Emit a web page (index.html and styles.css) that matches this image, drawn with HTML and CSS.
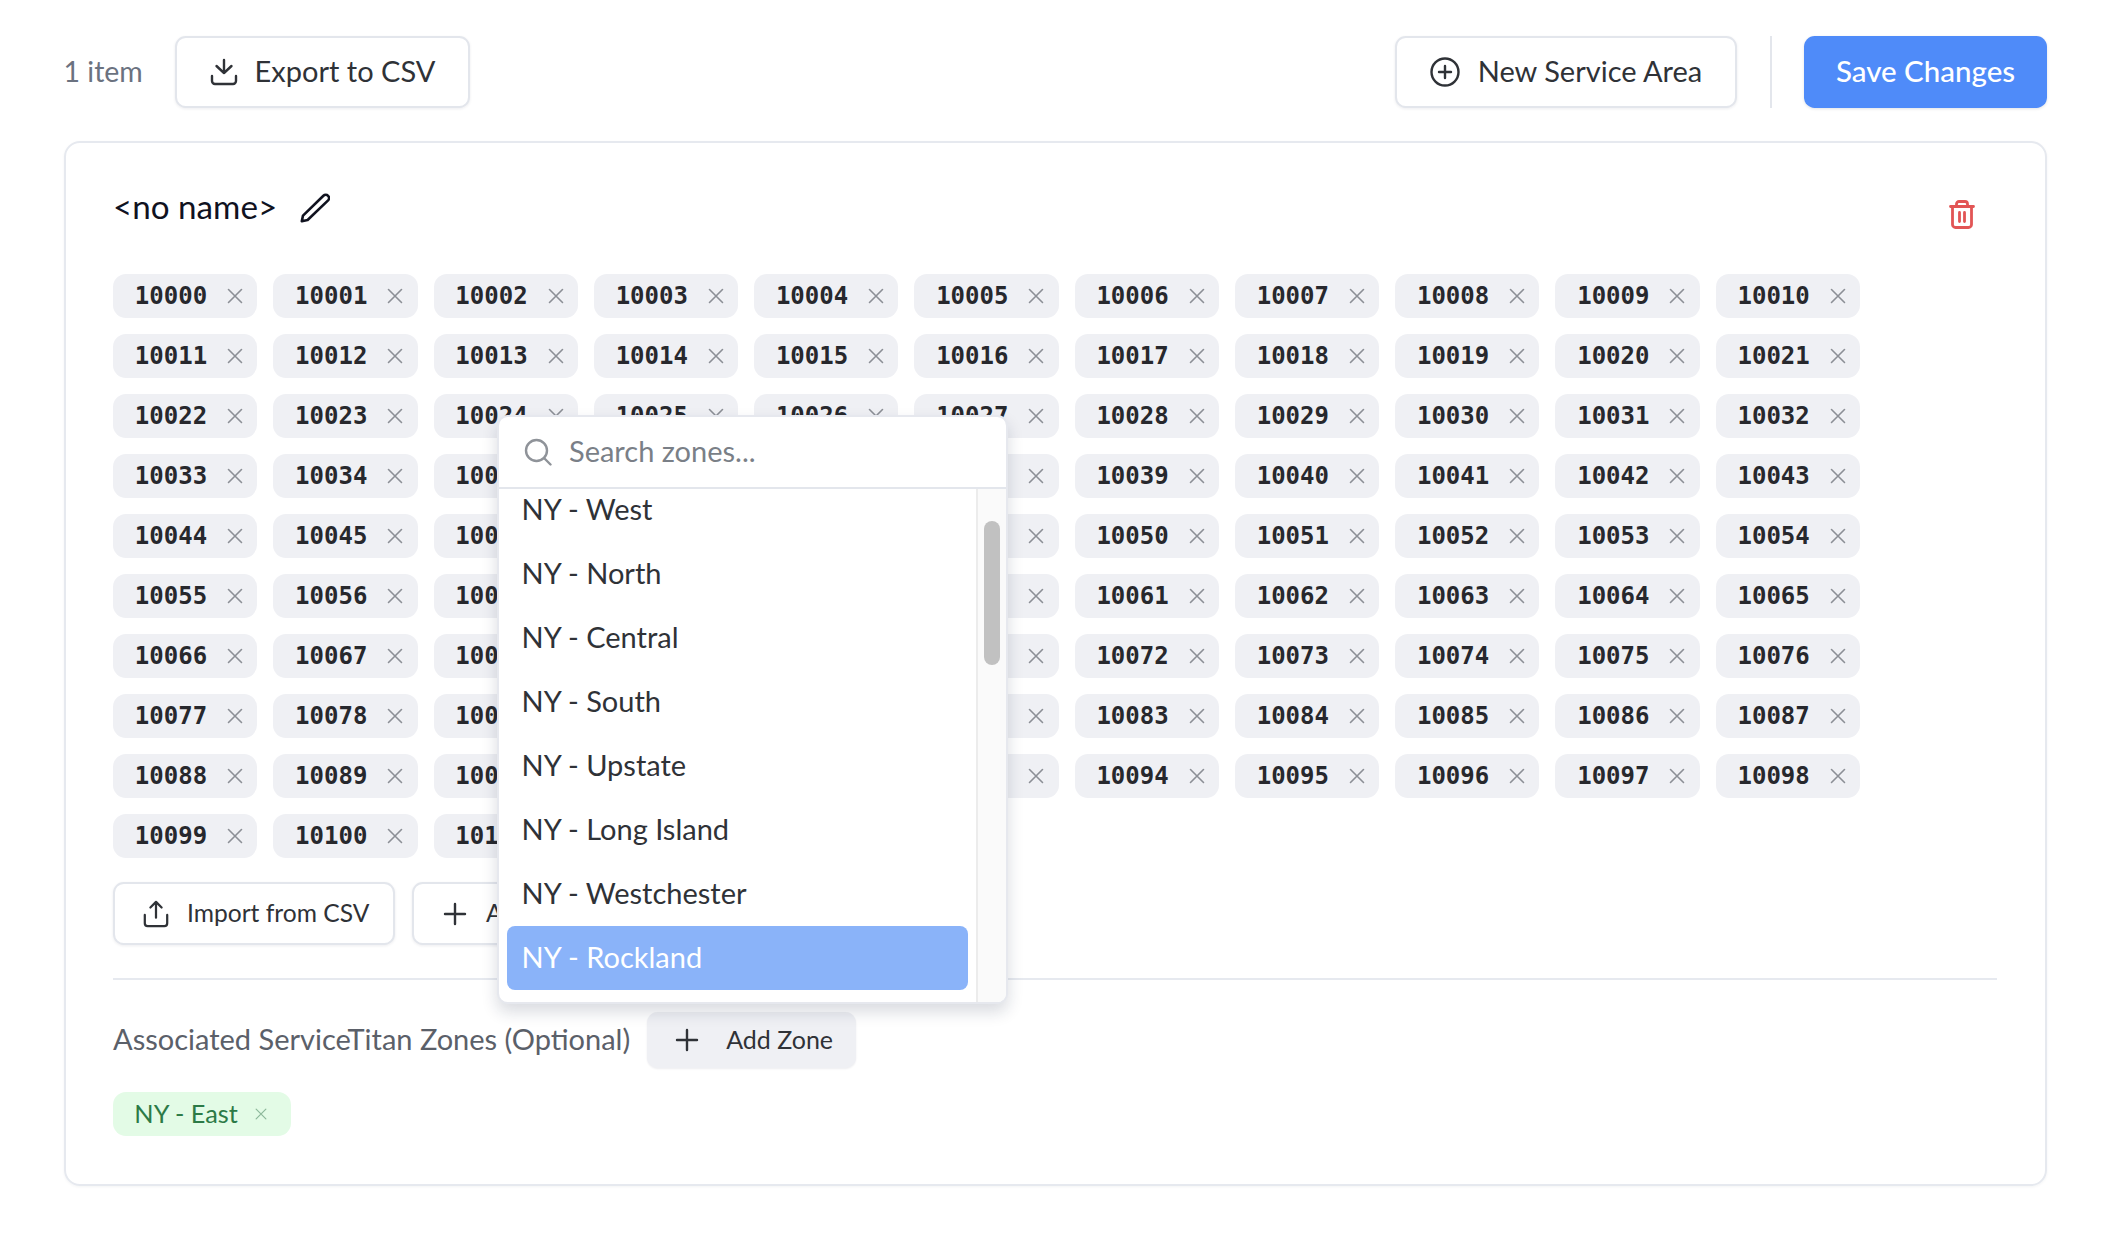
FILE: index.html
```html
<!DOCTYPE html>
<html lang="en">
<head>
<meta charset="utf-8">
<title>Service Areas</title>
<link rel="stylesheet" href="styles.css">
</head>
<body>
<svg class="defs" width="0" height="0" aria-hidden="true">
  <symbol id="x" viewBox="0 0 16 16"><path d="M1.5 1.5l13 13M14.5 1.5l-13 13" fill="none" stroke="currentColor" stroke-width="1.6" stroke-linecap="round"/></symbol>
</svg>
<div class="page">
  <header class="toolbar">
    <span class="count">1 item</span>
    <button class="btn btn-outline export">
      <svg class="icon28" viewBox="0 0 28 28" fill="none" stroke="currentColor" stroke-width="2.4" stroke-linecap="round" stroke-linejoin="round"><path d="M14 2v13M6.500 8l7.500 7 7.500-7M2 18v5a3 3 0 0 0 3 3h18a3 3 0 0 0 3-3v-5"/></svg>
      Export to CSV
    </button>
    <span class="spacer"></span>
    <button class="btn btn-outline new-area">
      <svg class="icon30" viewBox="0 0 30 30" fill="none" stroke="currentColor" stroke-width="2.4" stroke-linecap="round"><circle cx="15" cy="15" r="13.500"/><path d="M15 9v12M9 15h12"/></svg>
      New Service Area
    </button>
    <span class="vr"></span>
    <button class="btn btn-primary">Save Changes</button>
  </header>

  <section class="card">
    <div class="card-head">
      <h2 class="title">&lt;no name&gt;</h2>
      <svg class="pencil" viewBox="0 0 30 30" fill="none" stroke="currentColor" stroke-width="2.6" stroke-linejoin="round"><path d="M1.800 28.200l1.200-5.600L23.400 2.800a3.300 3.300 0 0 1 4.700 0 3.300 3.300 0 0 1 0 4.600L7.600 27z"/></svg>
      <span class="spacer"></span>
      <svg class="trash" viewBox="0 0 26 29" fill="none" stroke="currentColor" stroke-width="2.800" stroke-linecap="round" stroke-linejoin="round"><path d="M1.500 6.500h23M7.500 6.500V4a2.500 2.500 0 0 1 2.500-2.500h6A2.500 2.500 0 0 1 18.500 4v2.500M3.500 6.500V24.500a3 3 0 0 0 3 3h13a3 3 0 0 0 3-3V6.500M10.500 12.500v9M15.500 12.500v9"/></svg>
    </div>

    <div class="chips">
      <span class="chip">10000<svg class="x"><use href="#x"/></svg></span>
      <span class="chip">10001<svg class="x"><use href="#x"/></svg></span>
      <span class="chip">10002<svg class="x"><use href="#x"/></svg></span>
      <span class="chip">10003<svg class="x"><use href="#x"/></svg></span>
      <span class="chip">10004<svg class="x"><use href="#x"/></svg></span>
      <span class="chip">10005<svg class="x"><use href="#x"/></svg></span>
      <span class="chip">10006<svg class="x"><use href="#x"/></svg></span>
      <span class="chip">10007<svg class="x"><use href="#x"/></svg></span>
      <span class="chip">10008<svg class="x"><use href="#x"/></svg></span>
      <span class="chip">10009<svg class="x"><use href="#x"/></svg></span>
      <span class="chip">10010<svg class="x"><use href="#x"/></svg></span>
      <span class="chip">10011<svg class="x"><use href="#x"/></svg></span>
      <span class="chip">10012<svg class="x"><use href="#x"/></svg></span>
      <span class="chip">10013<svg class="x"><use href="#x"/></svg></span>
      <span class="chip">10014<svg class="x"><use href="#x"/></svg></span>
      <span class="chip">10015<svg class="x"><use href="#x"/></svg></span>
      <span class="chip">10016<svg class="x"><use href="#x"/></svg></span>
      <span class="chip">10017<svg class="x"><use href="#x"/></svg></span>
      <span class="chip">10018<svg class="x"><use href="#x"/></svg></span>
      <span class="chip">10019<svg class="x"><use href="#x"/></svg></span>
      <span class="chip">10020<svg class="x"><use href="#x"/></svg></span>
      <span class="chip">10021<svg class="x"><use href="#x"/></svg></span>
      <span class="chip">10022<svg class="x"><use href="#x"/></svg></span>
      <span class="chip">10023<svg class="x"><use href="#x"/></svg></span>
      <span class="chip">10024<svg class="x"><use href="#x"/></svg></span>
      <span class="chip">10025<svg class="x"><use href="#x"/></svg></span>
      <span class="chip">10026<svg class="x"><use href="#x"/></svg></span>
      <span class="chip">10027<svg class="x"><use href="#x"/></svg></span>
      <span class="chip">10028<svg class="x"><use href="#x"/></svg></span>
      <span class="chip">10029<svg class="x"><use href="#x"/></svg></span>
      <span class="chip">10030<svg class="x"><use href="#x"/></svg></span>
      <span class="chip">10031<svg class="x"><use href="#x"/></svg></span>
      <span class="chip">10032<svg class="x"><use href="#x"/></svg></span>
      <span class="chip">10033<svg class="x"><use href="#x"/></svg></span>
      <span class="chip">10034<svg class="x"><use href="#x"/></svg></span>
      <span class="chip">10035<svg class="x"><use href="#x"/></svg></span>
      <span class="chip">10036<svg class="x"><use href="#x"/></svg></span>
      <span class="chip">10037<svg class="x"><use href="#x"/></svg></span>
      <span class="chip">10038<svg class="x"><use href="#x"/></svg></span>
      <span class="chip">10039<svg class="x"><use href="#x"/></svg></span>
      <span class="chip">10040<svg class="x"><use href="#x"/></svg></span>
      <span class="chip">10041<svg class="x"><use href="#x"/></svg></span>
      <span class="chip">10042<svg class="x"><use href="#x"/></svg></span>
      <span class="chip">10043<svg class="x"><use href="#x"/></svg></span>
      <span class="chip">10044<svg class="x"><use href="#x"/></svg></span>
      <span class="chip">10045<svg class="x"><use href="#x"/></svg></span>
      <span class="chip">10046<svg class="x"><use href="#x"/></svg></span>
      <span class="chip">10047<svg class="x"><use href="#x"/></svg></span>
      <span class="chip">10048<svg class="x"><use href="#x"/></svg></span>
      <span class="chip">10049<svg class="x"><use href="#x"/></svg></span>
      <span class="chip">10050<svg class="x"><use href="#x"/></svg></span>
      <span class="chip">10051<svg class="x"><use href="#x"/></svg></span>
      <span class="chip">10052<svg class="x"><use href="#x"/></svg></span>
      <span class="chip">10053<svg class="x"><use href="#x"/></svg></span>
      <span class="chip">10054<svg class="x"><use href="#x"/></svg></span>
      <span class="chip">10055<svg class="x"><use href="#x"/></svg></span>
      <span class="chip">10056<svg class="x"><use href="#x"/></svg></span>
      <span class="chip">10057<svg class="x"><use href="#x"/></svg></span>
      <span class="chip">10058<svg class="x"><use href="#x"/></svg></span>
      <span class="chip">10059<svg class="x"><use href="#x"/></svg></span>
      <span class="chip">10060<svg class="x"><use href="#x"/></svg></span>
      <span class="chip">10061<svg class="x"><use href="#x"/></svg></span>
      <span class="chip">10062<svg class="x"><use href="#x"/></svg></span>
      <span class="chip">10063<svg class="x"><use href="#x"/></svg></span>
      <span class="chip">10064<svg class="x"><use href="#x"/></svg></span>
      <span class="chip">10065<svg class="x"><use href="#x"/></svg></span>
      <span class="chip">10066<svg class="x"><use href="#x"/></svg></span>
      <span class="chip">10067<svg class="x"><use href="#x"/></svg></span>
      <span class="chip">10068<svg class="x"><use href="#x"/></svg></span>
      <span class="chip">10069<svg class="x"><use href="#x"/></svg></span>
      <span class="chip">10070<svg class="x"><use href="#x"/></svg></span>
      <span class="chip">10071<svg class="x"><use href="#x"/></svg></span>
      <span class="chip">10072<svg class="x"><use href="#x"/></svg></span>
      <span class="chip">10073<svg class="x"><use href="#x"/></svg></span>
      <span class="chip">10074<svg class="x"><use href="#x"/></svg></span>
      <span class="chip">10075<svg class="x"><use href="#x"/></svg></span>
      <span class="chip">10076<svg class="x"><use href="#x"/></svg></span>
      <span class="chip">10077<svg class="x"><use href="#x"/></svg></span>
      <span class="chip">10078<svg class="x"><use href="#x"/></svg></span>
      <span class="chip">10079<svg class="x"><use href="#x"/></svg></span>
      <span class="chip">10080<svg class="x"><use href="#x"/></svg></span>
      <span class="chip">10081<svg class="x"><use href="#x"/></svg></span>
      <span class="chip">10082<svg class="x"><use href="#x"/></svg></span>
      <span class="chip">10083<svg class="x"><use href="#x"/></svg></span>
      <span class="chip">10084<svg class="x"><use href="#x"/></svg></span>
      <span class="chip">10085<svg class="x"><use href="#x"/></svg></span>
      <span class="chip">10086<svg class="x"><use href="#x"/></svg></span>
      <span class="chip">10087<svg class="x"><use href="#x"/></svg></span>
      <span class="chip">10088<svg class="x"><use href="#x"/></svg></span>
      <span class="chip">10089<svg class="x"><use href="#x"/></svg></span>
      <span class="chip">10090<svg class="x"><use href="#x"/></svg></span>
      <span class="chip">10091<svg class="x"><use href="#x"/></svg></span>
      <span class="chip">10092<svg class="x"><use href="#x"/></svg></span>
      <span class="chip">10093<svg class="x"><use href="#x"/></svg></span>
      <span class="chip">10094<svg class="x"><use href="#x"/></svg></span>
      <span class="chip">10095<svg class="x"><use href="#x"/></svg></span>
      <span class="chip">10096<svg class="x"><use href="#x"/></svg></span>
      <span class="chip">10097<svg class="x"><use href="#x"/></svg></span>
      <span class="chip">10098<svg class="x"><use href="#x"/></svg></span>
      <span class="chip">10099<svg class="x"><use href="#x"/></svg></span>
      <span class="chip">10100<svg class="x"><use href="#x"/></svg></span>
      <span class="chip">10101<svg class="x"><use href="#x"/></svg></span>
    </div>

    <div class="actions">
      <button class="btn-sm">
        <svg class="icon28" viewBox="0 0 28 30" fill="none" stroke="currentColor" stroke-width="2.400" stroke-linecap="round" stroke-linejoin="round"><path d="M14 19V2M8 8l6-6 6 6M2 16v9a3 3 0 0 0 3 3h18a3 3 0 0 0 3-3v-9"/></svg>
        Import from CSV
      </button>
      <button class="btn-sm">
        <svg class="icon28" viewBox="0 0 28 28" fill="none" stroke="currentColor" stroke-width="2.400" stroke-linecap="round"><path d="M14 4v20M4 14h20"/></svg>
        Add Zip Code
      </button>
    </div>

    <hr class="rule">

    <div class="zones-row">
      <span class="zones-label">Associated ServiceTitan Zones (Optional)</span>
      <button class="btn-soft">
        <svg class="icon28" viewBox="0 0 28 28" fill="none" stroke="currentColor" stroke-width="2.400" stroke-linecap="round"><path d="M14 4v20M4 14h20"/></svg>
        Add Zone
      </button>
    </div>

    <div class="zone-tags">
      <span class="zone-tag">NY - East<svg class="x-small"><use href="#x"/></svg></span>
    </div>

    <div class="dropdown">
      <div class="search">
        <svg class="search-icon" viewBox="0 0 28 28" fill="none" stroke="currentColor" stroke-width="2.400" stroke-linecap="round"><circle cx="12.500" cy="12.500" r="10.500"/><path d="M20.500 20.500l6 6"/></svg>
        <span class="placeholder">Search zones...</span>
      </div>
      <div class="list-wrap">
        <ul class="list">
          <li class="item">NY - West</li>
          <li class="item">NY - North</li>
          <li class="item">NY - Central</li>
          <li class="item">NY - South</li>
          <li class="item">NY - Upstate</li>
          <li class="item">NY - Long Island</li>
          <li class="item">NY - Westchester</li>
          <li class="item item-active">NY - Rockland</li>
        </ul>
        <div class="track"><div class="thumb"></div></div>
      </div>
    </div>
  </section>
</div>
</body>
</html>
```

FILE: styles.css
```css
* { box-sizing: border-box; }
html, body { margin: 0; padding: 0; background: #fff; }
body { font-family: "Lato", "Noto Sans", sans-serif; color: #2f3237; }
.defs { position: absolute; }
button { font-family: inherit; cursor: pointer; }

.page { padding: 36px 59px 51px 63.500px; }

.toolbar { display: flex; align-items: center; height: 72px; margin-bottom: 32.500px; }
.spacer { flex: 1; }
.count { font-size: 28.500px; color: #6b7280; width: 111.500px; padding-bottom: 3px; }
.btn { display: flex; align-items: center; justify-content: center; height: 72px; border-radius: 10.67px; font-size: 29px; padding: 0 0 3px; }
.btn svg, .btn-sm svg, .btn-soft svg { margin-top: 3px; }
.btn-outline { background: #fff; border: 2px solid #e3e6ec; color: #2f3237; box-shadow: 0 1px 3px rgba(20,30,60,.08); }
.export { width: 295px; gap: 17px; }
.new-area { width: 342px; gap: 18px; }
.vr { width: 2px; height: 72px; background: #e3e6ec; margin: 0 32px 0 33px; }
.btn-primary { width: 243px; border: 0; background: #4f8bf9; color: #fff; font-size: 29.500px; font-weight: 500; box-shadow: 0 1px 3px rgba(20,30,60,.12); }
.icon28 { width: 28px; height: 28px; flex: none; }
.icon30 { width: 30px; height: 30px; flex: none; }

.card { position: relative; border: 2px solid #e6e9ef; border-radius: 16px; padding: 47.500px 47px 47.500px 47.500px; box-shadow: 0 1px 3px rgba(20,30,60,.05); }
.card-head { display: flex; align-items: flex-start; height: 39px; margin-bottom: 45px; }
.title { margin: 0; font-size: 33.200px; font-weight: 400; line-height: 33px; color: #10121f; }
.pencil { width: 30px; height: 30px; margin: 3px 0 0 23px; color: #10121f; }
.trash { width: 26px; height: 29px; margin: 10px 23.500px 0 0; color: #e25555; }

.chips { display: flex; flex-wrap: wrap; gap: 16px; }
.chip { display: inline-flex; align-items: center; gap: 20px; height: 44px; padding: 0 14.200px 0 21.830px; border-radius: 13px; background: #eff0f4; color: #27282d; font-family: "DejaVu Sans Mono", monospace; font-weight: 700; font-size: 24px; }
.x { width: 16px; height: 16px; color: #8c8f96; flex: none; }

.actions { display: flex; gap: 17px; margin-top: 24px; }
.btn-sm { display: flex; align-items: center; gap: 17px; height: 63px; width: 282px; padding: 0 0 3px 27px; border: 2px solid #e3e6ec; border-radius: 10.67px; background: #fff; color: #2f3237; font-size: 24.600px; box-shadow: 0 1px 3px rgba(20,30,60,.08); }

.rule { border: 0; height: 2px; background: #e6e9ef; margin: 33px 1px 32px 0; }

.zones-row { display: flex; align-items: center; gap: 17px; height: 56px; }
.zones-label { font-size: 29px; color: #5b6069; padding-bottom: 3px; }
.btn-soft { display: flex; align-items: center; gap: 25px; height: 56px; width: 209px; padding: 0 0 3px 26px; border: 0; border-radius: 10.67px; background: #eff0f4; color: #2f3237; font-size: 25px; box-shadow: 0 1px 2px rgba(20,30,60,.08); }

.zone-tags { margin-top: 24px; display: flex; }
.zone-tag { display: inline-flex; align-items: center; gap: 17px; height: 44px; padding: 0 24px 2px 21.330px; border-radius: 13px; background: #e3fbe6; color: #2c7a46; font-size: 25.300px; }
.x-small { width: 12px; height: 12px; margin-top: 2px; color: #8cb89a; }

.dropdown { position: absolute; left: 431.500px; top: 272px; width: 511px; height: 589px; background: #fff; border-radius: 10.67px; border: 2px solid #e6e8ee; box-shadow: 0 8px 16px rgba(20,30,60,.16); overflow: hidden; display: flex; flex-direction: column; }
.search { display: flex; align-items: center; gap: 17px; height: 72px; padding: 0 0 3px 25px; border-bottom: 2px solid #e3e6ec; flex: none; }
.search-icon { width: 28px; height: 28px; margin-top: 3px; color: #8f9399; flex: none; }
.placeholder { font-size: 29px; color: #7a7f87; }
.list-wrap { flex: 1; display: flex; min-height: 0; }
.list { flex: 1; list-style: none; margin: -11px 0 0; padding: 0 8px 0 7.500px; }
.item { height: 64px; display: flex; align-items: center; padding: 0 0 3px 15px; font-size: 29px; color: #2f3237; border-radius: 8px; }
.item-active { background: #8ab3f9; color: #fff; }
.track { width: 30px; flex: none; background: #fafafa; border-left: 2px solid #ececec; padding: 32px 0 0 6px; }
.thumb { width: 16px; height: 144px; border-radius: 8px; background: #c1c1c1; }
```
